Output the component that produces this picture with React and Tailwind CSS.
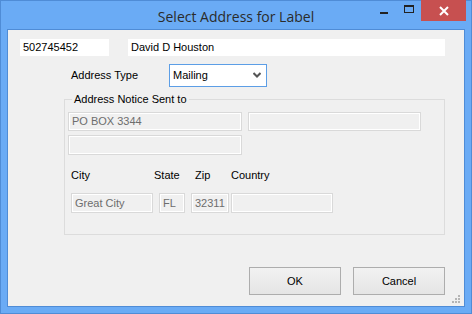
import React from 'react';

const font = { fontFamily: '"Liberation Sans", Arial, sans-serif' };

const Field = ({ className = '', children }) => (
  <div className={`border border-[#d9d9d9] bg-[#f0f0f0] shadow-[inset_0_0_0_1px_#ffffff] pl-[3px] text-[11px] leading-[17px] text-[#6d6d6d] ${className}`}>
    {children}
  </div>
);

const Button = ({ children }) => (
  <div className="w-[92px] h-[28px] border border-[#adadad] bg-gradient-to-b from-[#f2f2f2] to-[#e5e5e5] flex items-center justify-center text-[11px] text-black">
    {children}
  </div>
);

export default function App() {
  return (
    <div className="w-[472px] h-[314px] bg-[#6aabf5] border border-[#4f8cd6] flex flex-col relative" style={font}>
      <div className="h-[28px] relative flex items-center justify-center">
        <span className="text-[14px] text-[#2b2b2b] mt-[2px]" style={{ fontFamily: '"Open Sans", sans-serif' }}>
          Select Address for Label
        </span>
        <div className="absolute right-[5px] top-[-1px] flex items-start">
          <div className="w-[26px] h-[20px] flex items-center justify-center">
            <div className="w-[8px] h-[2px] bg-[#222] mt-[6px]" />
          </div>
          <div className="w-[26px] h-[20px] flex items-center justify-center ml-[-1px]">
            <div className="w-[10px] h-[8px] border border-[#222] border-t-2 mt-[-2px]" />
          </div>
          <div className="w-[45px] h-[21px] bg-[#c75050] flex items-center justify-center ml-[-1px]">
            <svg width="10" height="10" viewBox="0 0 10 10">
              <path d="M1 1 L9 9 M9 1 L1 9" stroke="#fff" strokeWidth="2" />
            </svg>
          </div>
        </div>
      </div>

      <div className="mx-[6px] h-[278px] border border-[#4f8cd6] bg-[#f0f0f0] flex flex-col text-[11px] text-black">
        <div className="flex mt-[9px] ml-[12px] gap-[19px]">
          <div className="w-[89px] h-[17px] bg-white pl-[3px] leading-[17px]">502745452</div>
          <div className="w-[317px] h-[17px] bg-white pl-[3px] leading-[17px]">David D Houston</div>
        </div>

        <div className="flex items-center mt-[8px] ml-[63px]">
          <span className="w-[98px]">Address Type</span>
          <div className="w-[98px] h-[23px] border border-[#5c9ee6] bg-white flex items-center justify-between pl-[3px] pr-[5px]">
            <span>Mailing</span>
            <svg width="8" height="7" viewBox="0 0 8 7">
              <path d="M0.5 1 L4 4.5 L7.5 1" stroke="#555" strokeWidth="2" fill="none" />
            </svg>
          </div>
        </div>

        <div className="relative mt-[12px] ml-[56px] w-[381px] h-[136px] border border-[#dcdcdc] pl-[3px] pt-[12px]">
          <span className="absolute left-[7px] top-[-8px] bg-[#f0f0f0] px-[2px] leading-[14px]">Address Notice Sent to</span>
          <div className="flex gap-[6px]">
            <Field className="w-[174px] h-[19px]">PO BOX 3344</Field>
            <Field className="w-[173px] h-[19px]" />
          </div>
          <Field className="w-[174px] h-[20px] mt-[4px]" />

          <div className="flex mt-[14px] ml-[3px] leading-[13px]">
            <span className="w-[83px]">City</span>
            <span className="w-[41px]">State</span>
            <span className="w-[36px]">Zip</span>
            <span>Country</span>
          </div>
          <div className="flex mt-[11px] ml-[3px]">
            <Field className="w-[82px] h-[20px] leading-[18px]">Great City</Field>
            <Field className="w-[26px] h-[20px] leading-[18px] ml-[6px]">FL</Field>
            <Field className="w-[38px] h-[20px] leading-[18px] ml-[6px] pl-[2px]">32311</Field>
            <Field className="w-[102px] h-[20px] ml-[2px]" />
          </div>
        </div>

        <div className="flex mt-[32px] ml-[241px] gap-[12px]">
          <Button>OK</Button>
          <Button>Cancel</Button>
        </div>
      </div>

      <svg className="absolute right-[10px] bottom-[9px]" width="9" height="9" viewBox="0 0 9 9">
        <rect x="6" y="0" width="2" height="2" fill="#b5b5b5" />
        <rect x="3" y="3" width="2" height="2" fill="#b5b5b5" />
        <rect x="6" y="3" width="2" height="2" fill="#b5b5b5" />
        <rect x="0" y="6" width="2" height="2" fill="#b5b5b5" />
        <rect x="3" y="6" width="2" height="2" fill="#b5b5b5" />
        <rect x="6" y="6" width="2" height="2" fill="#b5b5b5" />
      </svg>
    </div>
  );
}
